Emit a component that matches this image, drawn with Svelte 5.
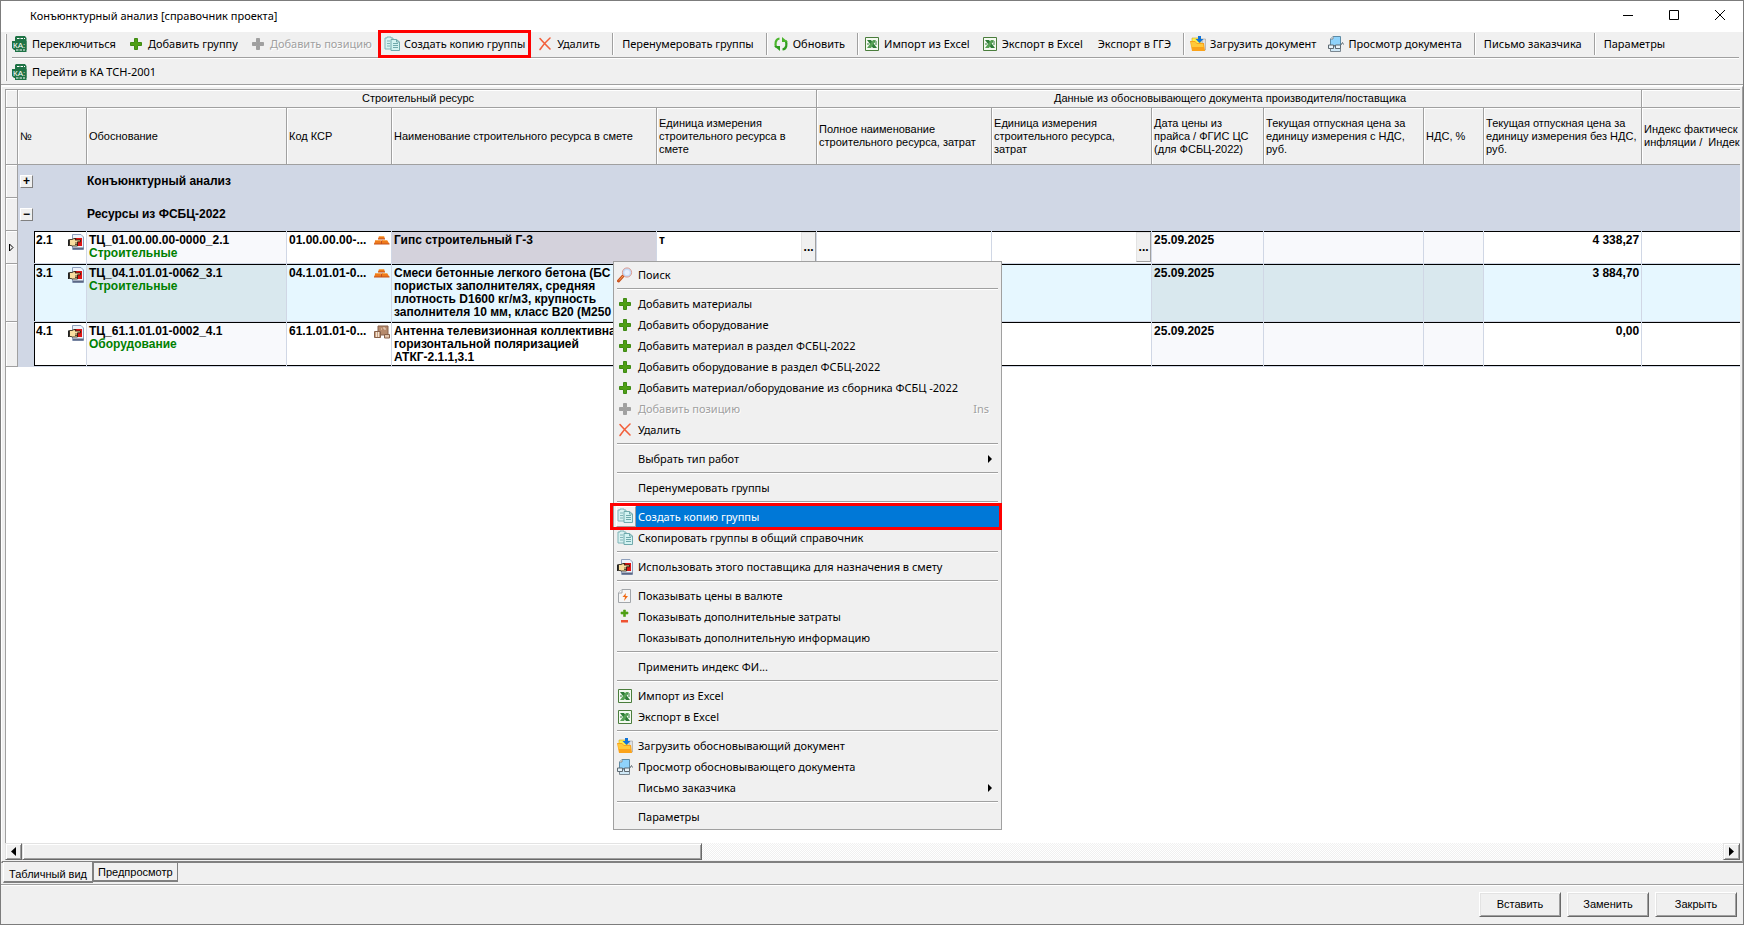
<script lang="ts">
	type Tool = { label?: string; icon?: string; disabled?: boolean; framed?: boolean; sep?: boolean };
	type MenuItem = Tool & { hot?: boolean; submenu?: boolean; key?: string };

	const tools: Tool[] = [
		{ label: 'Переключиться', icon: 'ka' },
		{ label: 'Добавить группу', icon: 'plus' },
		{ label: 'Добавить позицию', icon: 'plus', disabled: true },
		{ label: 'Создать копию группы', icon: 'copy', framed: true },
		{ label: 'Удалить', icon: 'cross' },
		{ sep: true },
		{ label: 'Перенумеровать группы' },
		{ sep: true },
		{ label: 'Обновить', icon: 'refresh' },
		{ sep: true },
		{ label: 'Импорт из Excel', icon: 'excel' },
		{ label: 'Экспорт в Excel', icon: 'excel' },
		{ label: 'Экспорт в ГГЭ' },
		{ sep: true },
		{ label: 'Загрузить документ', icon: 'load' },
		{ label: 'Просмотр документа', icon: 'view' },
		{ sep: true },
		{ label: 'Письмо заказчика' },
		{ sep: true },
		{ label: 'Параметры' }
	];

	const menu: MenuItem[] = [
		{ label: 'Поиск', icon: 'search' },
		{ sep: true },
		{ label: 'Добавить материалы', icon: 'plus' },
		{ label: 'Добавить оборудование', icon: 'plus' },
		{ label: 'Добавить материал в раздел ФСБЦ-2022', icon: 'plus' },
		{ label: 'Добавить оборудование в раздел ФСБЦ-2022', icon: 'plus' },
		{ label: 'Добавить материал/оборудование из сборника ФСБЦ -2022', icon: 'plus' },
		{ label: 'Добавить позицию', icon: 'plus', disabled: true, key: 'Ins' },
		{ label: 'Удалить', icon: 'cross' },
		{ sep: true },
		{ label: 'Выбрать тип работ', submenu: true },
		{ sep: true },
		{ label: 'Перенумеровать группы' },
		{ sep: true },
		{ label: 'Создать копию группы', icon: 'copy', hot: true },
		{ label: 'Скопировать группы в общий справочник', icon: 'copy' },
		{ sep: true },
		{ label: 'Использовать этого поставщика для назначения в смету', icon: 'hand' },
		{ sep: true },
		{ label: 'Показывать цены в валюте', icon: 'bolt' },
		{ label: 'Показывать дополнительные затраты', icon: 'plusminus' },
		{ label: 'Показывать дополнительную информацию' },
		{ sep: true },
		{ label: 'Применить индекс ФИ...' },
		{ sep: true },
		{ label: 'Импорт из Excel', icon: 'excel' },
		{ label: 'Экспорт в Excel', icon: 'excel' },
		{ sep: true },
		{ label: 'Загрузить обосновывающий документ', icon: 'load' },
		{ label: 'Просмотр обосновывающего документа', icon: 'view' },
		{ label: 'Письмо заказчика', submenu: true },
		{ sep: true },
		{ label: 'Параметры' }
	];

	const columns = [
		'Обоснование',
		'Код КСР',
		'Наименование строительного ресурса в смете',
		'Единица измерения\nстроительного ресурса в\nсмете',
		'Полное наименование\nстроительного ресурса, затрат',
		'Единица измерения\nстроительного ресурса,\nзатрат',
		'Дата цены из\nпрайса / ФГИС ЦС\n(для ФСБЦ-2022)',
		'Текущая отпускная цена за\nединицу измерения с НДС,\nруб.',
		'НДС, %',
		'Текущая отпускная цена за\nединицу измерения без НДС,\nруб.',
		'Индекс фактическ\nинфляции /  Индек'
	];

	const groups = [
		{ name: 'Конъюнктурный анализ', open: false },
		{ name: 'Ресурсы из ФСБЦ-2022', open: true }
	];

	const rows = [
		{
			num: '2.1',
			basis: 'ТЦ_01.00.00.00-0000_2.1',
			kind: 'Строительные',
			code: '01.00.00.00-...',
			icon: 'bricks',
			name: 'Гипс строительный Г-3',
			unit: 'т',
			date: '25.09.2025',
			price: '4 338,27'
		},
		{
			num: '3.1',
			basis: 'ТЦ_04.1.01.01-0062_3.1',
			kind: 'Строительные',
			code: '04.1.01.01-0...',
			icon: 'bricks',
			name: 'Смеси бетонные легкого бетона (БС\nпористых заполнителях, средняя\nплотность D1600 кг/м3, крупность\nзаполнителя 10 мм, класс В20 (М250',
			unit: '',
			date: '25.09.2025',
			price: '3 884,70'
		},
		{
			num: '4.1',
			basis: 'ТЦ_61.1.01.01-0002_4.1',
			kind: 'Оборудование',
			code: '61.1.01.01-0...',
			icon: 'boxes',
			name: 'Антенна телевизионная коллективна\nгоризонтальной поляризацией\nАТКГ-2.1.1,3.1',
			unit: '',
			date: '25.09.2025',
			price: '0,00'
		}
	];

	let selected = $state(0);
	let tab = $state(0);
</script>

{#snippet icon(name: string, off = false)}
	<svg class="icon" width="16" height="16" viewBox="0 0 16 16" aria-hidden="true">
		{#if name === 'ka'}
			<path d="M4 0h9l1.500 2v14H3V1z" fill="#1f7346" />
			<path d="M0 5h14.500v9H2L0 12z" fill="#1f7346" />
			<path d="M5 2.500h8M4 14h9" stroke="#fff" stroke-dasharray="2.500 1" />
			<text x="1" y="11.500" font-size="8" fill="#fff">КА:</text>
		{:else if name === 'plus'}
			<path d="M6.500 2.500h3v4h4v3h-4v4h-3v-4h-4v-3h4z" fill={off ? '#a0a0a0' : '#4f9f14'} stroke={off ? '#a0a0a0' : '#3f8a14'} />
		{:else if name === 'copy'}
			<path d="M1 2h2V1h4v1h2v11H1z" fill="#d8f1f1" stroke="#7fb5b8" />
			<path d="M3 5h3M3 7.500h3M3 10h3" stroke="#7fb5b8" />
			<path d="M7 3.500h5.500L15.500 6v8.500H7z" fill="#d3f3f2" stroke="#70a9ac" />
			<path d="M12.500 3.500V6h3M9 7.500h5M9 9.500h5M9 11.500h5" fill="none" stroke="#70a9ac" />
		{:else if name === 'cross'}
			<path d="M3 2.500C6 6 10 10 13 13M13 2C9 5.500 6 9 3 13.500" fill="none" stroke="#f2603c" stroke-width="1.600" stroke-linecap="round" />
		{:else if name === 'refresh'}
			<path d="M6.500 2.500C2.500 3 1.500 8 3.500 11.500" fill="none" stroke="#4bb52c" stroke-width="2.200" />
			<path d="M1 10h6v5z" fill="#2f9c1f" />
			<path d="M9.500 13.500c4-.5 5-5.500 3-9" fill="none" stroke="#2f9c1f" stroke-width="2.200" />
			<path d="M15 6H9V1z" fill="#4bb52c" />
		{:else if name === 'excel'}
			<path d="M1.500 1.500h13v13h-13z" fill="#f4faf1" stroke="#4a7d3c" />
			<path d="M3 4h4l6 8H9z" fill="#2f7d38" />
			<path d="M12 4H9l-6 8h4z" fill="#57a255" />
			<path d="M10 6h3M11 8h2M3 8h2" stroke="#2f7d38" />
		{:else if name === 'load'}
			<path d="M2 2h9v6H2z" fill="#fff04a" stroke="#c9a51c" stroke-width=".6" />
			<path d="M12 3h3.500v11H13z" fill="#e0e2e4" stroke="#9b9b9b" stroke-width=".6" />
			<path d="M0 5h5l2 2h7l1 8H2z" fill="#fba31a" />
			<path d="M1 6h4l2 2h6l.5 3H1.500z" fill="#ffc93a" />
			<path d="M8 0h3v3h2.500L9.500 7 5.500 3H8z" fill="#1173d8" />
		{:else if name === 'view'}
			<path d="M5 .5h7.500v9H2.500V3z" fill="#8fd3fb" stroke="#5c8aa5" />
			<path d="M2.500 3H5V.5" fill="#fff" stroke="#8c8c8c" />
			<path d="M2.500 9v6.500h10V12" fill="#cfe8f6" stroke="#7b8790" />
			<path d="M.5 9h5v3.500h-5zM7.500 9h5v3.500h-5z" fill="#e6f2f8" stroke="#5f6a72" />
			<path d="M5.500 10h2M12.500 9.500l2-3 1 2" fill="none" stroke="#5f6a72" />
		{:else if name === 'hand'}
			<path d="M4.500.5H13L15.500 3v12.500h-11z" fill="#eef3fb" stroke="#8fa0bd" />
			<path d="M6 4h8v8H6z" fill="#e01414" />
			<path d="M5 14.500h10.500" stroke="#5c6884" stroke-width="2" />
			<path d="M1.500 5.500H4l2-1h2L7 6h5.500v1.800H9.500V12H4.500L3 11.500H1.500z" fill="#f9dfa0" stroke="#1c1408" stroke-width=".8" />
			<path d="M7 9h2.500M7 10.500h2.500" stroke="#1c1408" stroke-width=".7" />
			<path d="M0 5.500h1.500V12H0z" fill="#222" />
		{:else if name === 'bricks'}
			<path d="M5 2h5l1 3H4zM1.500 6h5l1 4H0zM8 6h5l2.500 4H8z" fill="#ee7a1c" />
			<path d="M5 2h5v1H5zM2 6h4.500v1H2zM8.500 6H13v1H8.500z" fill="#f9a850" />
			<path d="M4 5h7M0 10h15.500M7.500 6.500V10" stroke="#c4501a" />
		{:else if name === 'boxes'}
			<path d="M4 1h10v9H4z" fill="#b68a6c" stroke="#87614a" />
			<path d="M7 4h1M9 3h2v2M5 7h2" stroke="#f0dccb" fill="none" />
			<path d="M.5 6.500h6v6h-6z" fill="#c9a283" stroke="#87614a" />
			<path d="M2.500 7v5M4.500 7v5" stroke="#f3e3d4" />
			<path d="M10.500 9.500h5V13h-5z" fill="#e3c6ae" stroke="#87614a" />
		{:else if name === 'search'}
			<path d="M1.500 14L6 9" stroke="#c9501a" stroke-width="3" stroke-linecap="round" />
			<path d="M2 13.500L6 9" stroke="#f4a261" />
			<circle cx="10" cy="5.500" r="4.600" fill="#c5dcf9" stroke="#dc9a8e" />
			<circle cx="10" cy="5.500" r="2.600" fill="#e6f0ff" />
		{:else if name === 'bolt'}
			<path d="M5 1.500h8.500v13h-12V5z" fill="#f6f6f6" stroke="#a2a6aa" />
			<path d="M1.500 5H5V1.500" fill="#fff" stroke="#a2a6aa" />
			<path d="M9 5L5.500 9H8l-1 4 4-5H8.500z" fill="#f06a14" />
		{:else if name === 'plusminus'}
			<path d="M6.500 1h2v2H11v2H8.500v2.500h-2V5H4V3h2.500z" fill="#4f9f14" stroke="#4f9f14" stroke-width=".6" />
			<path d="M4 11h7v2.500H4z" fill="#ef5231" />
		{/if}
	</svg>
{/snippet}

<div class="window">
	<header class="titlebar">
		<h1>Конъюнктурный анализ [справочник проекта]</h1>
		<div class="controls">
			<button aria-label="Свернуть"><svg width="12" height="12"><path d="M1 6.500h10" stroke="#000" /></svg></button>
			<button aria-label="Развернуть"><svg width="12" height="12"><path d="M1.500 1.500h9v9h-9z" stroke="#000" fill="none" /></svg></button>
			<button aria-label="Закрыть окно"><svg width="12" height="12"><path d="M1 1l10 10M11 1L1 11" stroke="#000" /></svg></button>
		</div>
	</header>

	<div class="toolbars">
		<div class="grip"></div>
		<div class="bars">
			<div class="bar">
				{#each tools as t}
					{#if t.sep}
						<span class="vsep"></span>
					{:else}
						<button class="tool" class:plain={!t.icon} class:framed={t.framed} disabled={t.disabled}>
							{#if t.icon}{@render icon(t.icon, t.disabled)}{/if}{t.label}
						</button>
					{/if}
				{/each}
			</div>
			<div class="bar second">
				<button class="tool">{@render icon('ka')}Перейти в КА ТСН-2001</button>
			</div>
		</div>
	</div>

	<main class="pane">
		<div class="grid">
			<table>
				<colgroup>
					<col class="c-mark" /><col class="c-indent" /><col class="c-num" /><col class="c-basis" />
					<col class="c-code" /><col class="c-name" /><col class="c-unit" /><col class="c-full" />
					<col class="c-unit" /><col class="c-date" /><col class="c-gross" /><col class="c-vat" />
					<col class="c-net" /><col class="c-index" />
				</colgroup>
				<thead>
					<tr class="bands">
						<th></th>
						<th colspan="6">Строительный ресурс</th>
						<th colspan="6">Данные из обосновывающего документа производителя/поставщика</th>
						<th></th>
					</tr>
					<tr class="heads">
						<th></th>
						<th colspan="2">№</th>
						{#each columns as c}
							<th>{c}</th>
						{/each}
					</tr>
				</thead>
				<tbody>
					{#each groups as g}
						<tr class="group">
							<td class="mark"></td>
							<td colspan="2"><button class="toggle" aria-label="Группа {g.name}">{g.open ? '−' : '+'}</button></td>
							<td colspan="11">{g.name}</td>
						</tr>
					{/each}
					{#each rows as r, i}
						<tr class="row" class:alt={i === 1} class:last={i === rows.length - 1} class:selected={i === selected} onclick={() => (selected = i)}>
							<td class="mark">
								{#if i === selected}
									<svg width="7" height="9"><path d="M1.500 1v7L5 4.500z" fill="none" stroke="#000" /></svg>
								{/if}
							</td>
							<td class="indent"></td>
							<td class="num"><div class="split"><span>{r.num}</span>{@render icon('hand')}</div></td>
							<td class="dim">{r.basis}<br /><span class="kind">{r.kind}</span></td>
							<td class="code"><div class="split"><span>{r.code}</span>{@render icon(r.icon)}</div></td>
							<td class="name">{r.name}</td>
							<td class:editor={i === selected}>
								<div class="split"><span>{r.unit}</span>{#if i === selected}<button class="dots" aria-label="Выбрать единицу">...</button>{/if}</div>
							</td>
							<td></td>
							<td class:editor={i === selected}>
								<div class="split"><span></span>{#if i === selected}<button class="dots" aria-label="Выбрать единицу затрат">...</button>{/if}</div>
							</td>
							<td class="dim">{r.date}</td>
							<td class="dim"></td>
							<td class="dim"></td>
							<td class="sum">{r.price}</td>
							<td></td>
						</tr>
					{/each}
				</tbody>
			</table>
		</div>
		<div class="scrollbar">
			<button aria-label="Прокрутить влево"><svg width="5" height="9"><path d="M5 0v9L0 4.500z" /></svg></button>
			<div class="track"><div class="thumb"></div></div>
			<button aria-label="Прокрутить вправо"><svg width="5" height="9"><path d="M0 0v9l5-4.500z" /></svg></button>
		</div>
	</main>

	<nav class="tabs">
		{#each ['Табличный вид', 'Предпросмотр'] as label, i}
			<button class:active={tab === i} onclick={() => (tab = i)}>{label}</button>
		{/each}
	</nav>

	<footer>
		<button>Вставить</button>
		<button>Заменить</button>
		<button>Закрыть</button>
	</footer>

	<div class="menu" role="menu">
		{#each menu as m}
			{#if m.sep}
				<hr />
			{:else}
				<button class="item" class:hot={m.hot} role="menuitem" disabled={m.disabled}>
					<span class="pic">{#if m.icon}{@render icon(m.icon, m.disabled)}{/if}</span>
					<span class="label">{m.label}</span>
					{#if m.key}<span class="key">{m.key}</span>{/if}
					{#if m.submenu}<svg class="arrow" width="4" height="8"><path d="M0 0v8l4-4z" /></svg>{/if}
				</button>
			{/if}
		{/each}
	</div>
</div>

<style>
	:global(body) {
		margin: 0;
	}

	.window {
		position: relative;
		box-sizing: border-box;
		height: 100vh;
		display: flex;
		flex-direction: column;
		border: 1px solid #7c7c7c;
		background: #f0f0f0;
		color: #000;
		font: 11px/16px 'Noto Sans', 'Open Sans', sans-serif;
		overflow: hidden;
	}

	button {
		margin: 0;
		padding: 0;
		border: 0;
		background: none;
		color: inherit;
		font: inherit;
		white-space: nowrap;
	}

	.icon {
		flex: none;
		display: block;
		font-family: 'Liberation Sans', sans-serif;
	}

	/* title bar */
	.titlebar {
		flex: none;
		height: 31px;
		display: flex;
		align-items: center;
		background: #fff;
	}

	h1 {
		flex: 1;
		margin: 0;
		padding: 0 0 2px 29px;
		font: inherit;
	}

	.controls {
		display: flex;
	}

	.controls button {
		width: 46px;
		height: 28px;
	}

	/* tool bars */
	.toolbars {
		flex: none;
		display: flex;
		padding: 0 4px;
		border-bottom: 1px solid #a0a0a0;
		box-shadow: 0 1px #fff;
	}

	.grip {
		flex: none;
		width: 1px;
		margin: 2px 5px 3px 0;
		border-right: 1px solid #a0a0a0;
		background: #fff;
	}

	.bars {
		flex: 1;
		min-width: 0;
	}

	.bar {
		box-sizing: border-box;
		display: flex;
		align-items: center;
		height: 25px;
		padding-bottom: 1px;
	}

	.second {
		height: 27px;
		padding: 1px 0 0 0;
		border-top: 1px solid #a0a0a0;
		box-shadow: inset 0 1px #fff;
	}

	.tool {
		flex: none;
		display: flex;
		align-items: center;
		gap: 4px;
		height: 22px;
		padding: 0 6px;
	}

	.bar .tool:first-child {
		padding-left: 0;
	}

	.tool.plain {
		padding-left: 9px;
	}

	.tool:disabled,
	.item:disabled {
		color: #a0a0a0;
		text-shadow: 1px 1px #fff;
	}

	.tool.framed {
		height: 28px;
		outline: 3px solid #f00;
		outline-offset: -3px;
	}

	.vsep {
		flex: none;
		width: 1px;
		height: 22px;
		margin-left: 6px;
		background: #a0a0a0;
		box-shadow: 1px 0 #fff;
	}

	/* table */
	.pane {
		flex: 1;
		min-height: 0;
		display: flex;
		flex-direction: column;
		margin-top: 1px;
		padding: 2px 2px 0 3px;
		border: 1px solid #fff;
		border-right: 1px solid #a0a0a0;
		border-bottom: 2px solid #808080;
	}

	.grid {
		flex: 1;
		min-height: 0;
		overflow: hidden;
		background: #fff;
		border-left: 1px solid #a0a0a0;
		border-top: 1px solid #a0a0a0;
		font: 11px/13px 'Liberation Sans', Arial, sans-serif;
	}

	table {
		table-layout: fixed;
		width: 1836px;
		border-collapse: separate;
		border-spacing: 0;
	}

	.c-mark { width: 12px; }
	.c-indent { width: 16px; }
	.c-num { width: 53px; }
	.c-basis { width: 200px; }
	.c-code { width: 105px; }
	.c-name { width: 265px; }
	.c-unit { width: 160px; }
	.c-full { width: 175px; }
	.c-date { width: 112px; }
	.c-gross { width: 160px; }
	.c-vat { width: 60px; }
	.c-net { width: 158px; }
	.c-index { width: 200px; }

	th {
		box-sizing: border-box;
		padding: 0 0 0 2px;
		border-right: 1px solid #a0a0a0;
		border-bottom: 1px solid #a0a0a0;
		box-shadow: inset 1px 1px #fff;
		background: #f0f0f0;
		font-weight: 400;
		text-align: left;
		white-space: pre;
		overflow: hidden;
	}

	.bands th {
		height: 18px;
		text-align: center;
	}

	.heads th {
		height: 57px;
	}

	td {
		box-sizing: border-box;
		padding: 3px 2px 0 2px;
		vertical-align: top;
		font-size: 12px;
		font-weight: 700;
		white-space: pre;
		overflow: hidden;
	}

	.mark {
		padding: 0 2px;
		vertical-align: middle;
		border-right: 1px solid #a0a0a0;
		border-bottom: 1px solid #a0a0a0;
		box-shadow: inset 1px 1px #fff;
		background: #f0f0f0;
	}

	.mark svg {
		display: block;
	}

	.group td {
		height: 33px;
		vertical-align: middle;
	}

	.group td:not(.mark) {
		padding: 0;
		background: #d0d7e5;
	}

	.toggle {
		display: block;
		box-sizing: border-box;
		width: 13px;
		height: 13px;
		margin-left: 2px;
		border: 1px solid;
		border-color: #fff #808080 #808080 #fff;
		background: #f0f0f0;
		line-height: 9px;
	}

	.row td:not(.mark) {
		border-right: 1px solid #d0d7e5;
		border-bottom: 1px solid #d0d7e5;
		box-shadow: inset 0 1px #000;
	}

	.row .indent:not(.mark) {
		background: #d0d7e5;
		box-shadow: none;
	}

	.row .num:not(.mark) {
		box-shadow: inset 1px 1px #000;
	}

	.row.last td:not(.mark, .indent) {
		box-shadow: inset 0 1px #000, inset 0 -1px #000;
	}

	.row.last .num:not(.mark, .indent) {
		box-shadow: inset 1px 1px #000, inset 0 -1px #000;
	}

	.row td {
		height: 33px;
	}

	.row.alt td {
		height: 58px;
	}

	.row.last td {
		height: 45px;
	}

	.alt td:not(.mark, .indent) {
		background: #e6f7ff;
	}

	.dim {
		background: #f8f9fc;
	}

	.alt td.dim:not(.mark) {
		background: #d9e8ee;
	}

	.selected .name {
		background: #d4d2dc;
	}

	.kind {
		color: #008000;
	}

	.split {
		display: flex;
		justify-content: space-between;
	}

	td.code {
		padding-right: 1px;
	}

	td.editor {
		padding: 1px 0 0 2px;
	}

	.sum {
		text-align: right;
	}

	.editor span {
		padding-top: 2px;
	}

	.dots {
		width: 15px;
		height: 30px;
		border: 1px solid;
		border-color: #e3e3e3 #a0a0a0 #a0a0a0 #e3e3e3;
		background: #f0f0f0;
	}

	/* scroll bar */
	.scrollbar {
		flex: none;
		height: 17px;
		display: flex;
		margin-bottom: 1px;
	}

	.scrollbar button,
	.thumb {
		box-sizing: border-box;
		border: 1px solid;
		border-color: #e3e3e3 #696969 #696969 #e3e3e3;
		box-shadow: inset 1px 1px #fff, inset -1px -1px #a0a0a0;
		background: #f0f0f0;
	}

	.scrollbar button {
		width: 17px;
		display: grid;
		place-items: center;
	}

	.track {
		flex: 1;
		background: repeating-conic-gradient(#fff 0 25%, #f0f0f0 0 50%) 0 0 / 2px 2px;
	}

	.thumb {
		width: 40%;
		height: 100%;
	}

	/* bottom tabs */
	.tabs {
		flex: none;
		height: 21px;
		display: flex;
		align-items: flex-start;
		padding-left: 2px;
		border-bottom: 1px solid #a0a0a0;
		box-shadow: 0 1px #fff;
		font: 11px/13px 'Liberation Sans', Arial, sans-serif;
	}

	.tabs button {
		height: 19px;
		padding: 2px 4px 0 4px;
		border: 1px solid #808080;
		border-top: 0;
		border-bottom-width: 2px;
	}

	.tabs .active {
		height: 21px;
		margin-top: -1px;
		padding: 6px 5px 0 5px;
		border-left-color: #fff;
		background: #f0f0f0;
	}

	/* dialog buttons */
	footer {
		flex: none;
		display: flex;
		justify-content: flex-end;
		gap: 6px;
		padding: 7px 6px 7px 0;
		font: 11px/13px 'Liberation Sans', Arial, sans-serif;
	}

	footer button {
		box-sizing: border-box;
		width: 82px;
		height: 25px;
		border: 1px solid;
		border-color: #fff #696969 #696969 #fff;
		box-shadow: inset 1px 1px #e3e3e3, inset -1px -1px #a0a0a0;
	}

	/* context menu */
	.menu {
		position: absolute;
		left: 612px;
		top: 260px;
		width: 383px;
		padding: 2px;
		border: 1px solid #a0a0a0;
		background: #f0f0f0;
	}

	.item {
		position: relative;
		display: flex;
		align-items: center;
		width: 100%;
		height: 21px;
		text-align: left;
	}

	.pic {
		width: 20px;
		height: 16px;
		box-sizing: border-box;
		padding-left: 1px;
	}

	.label {
		flex: 1;
		align-self: stretch;
		padding-left: 2px;
		line-height: 21px;
	}

	.hot {
		color: #fff;
	}

	/* frame round the highlighted command, wider than the menu itself */
	.hot::after {
		content: '';
		position: absolute;
		inset: -3px -3px -3px -6px;
		border: 3px solid #f00;
	}

	.hot .pic {
		height: 21px;
		padding: 1px 0 0 0;
		border: 1px solid;
		border-color: #fff #a0a0a0 #a0a0a0 #fff;
	}

	.hot .label {
		background: #0078d7;
	}

	.key {
		margin-right: 10px;
	}

	.arrow {
		margin-right: 7px;
	}

	hr {
		height: 1px;
		margin: 3px 1px 4px 1px;
		border: 0;
		background: #a0a0a0;
		box-shadow: 0 1px #fff;
	}
</style>
